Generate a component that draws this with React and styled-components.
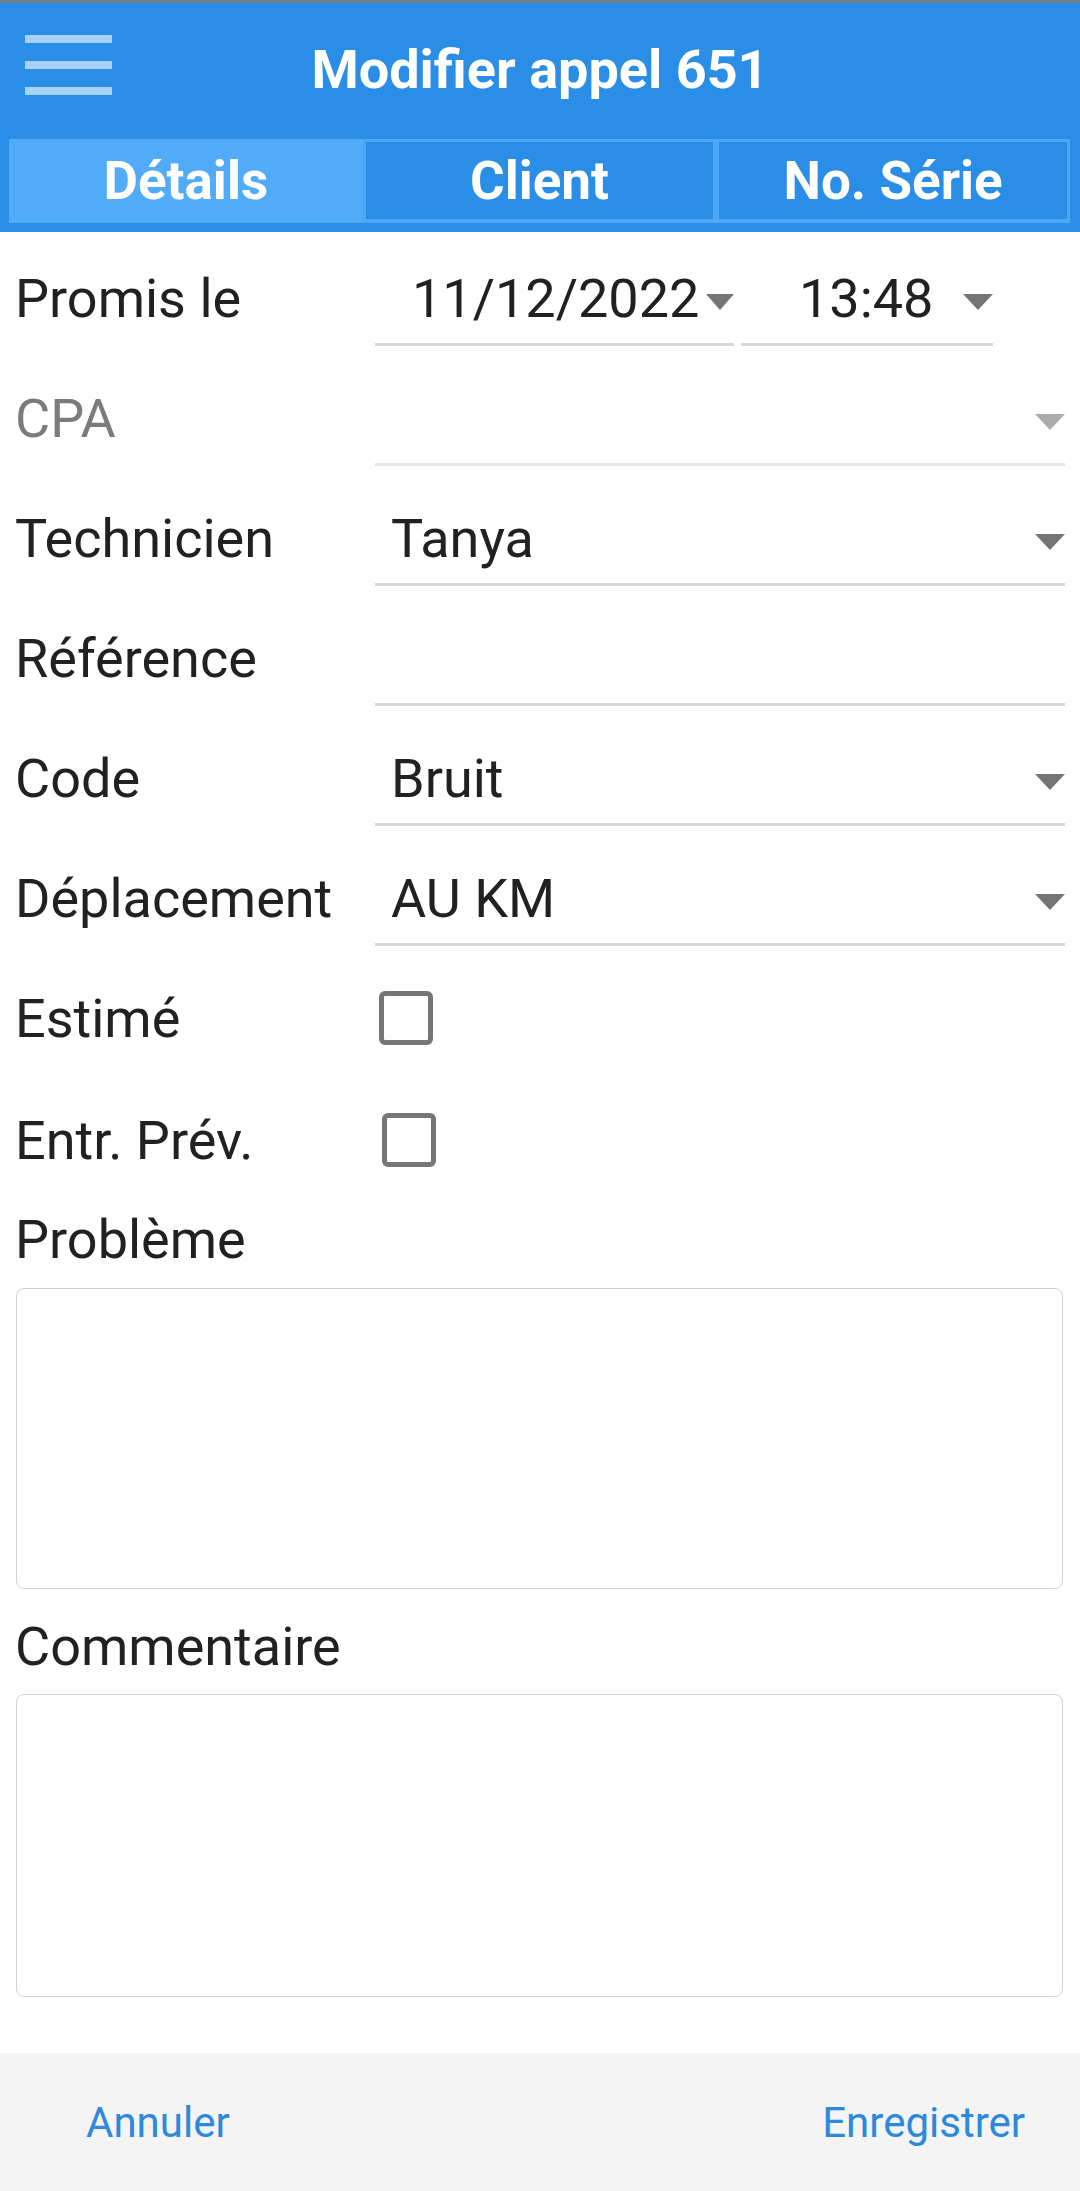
import React from "react";
import styled, { createGlobalStyle } from "styled-components";

const GlobalStyle = createGlobalStyle`
  html, body { margin: 0; padding: 0; background: #ffffff; }
  body { font-family: Roboto, "Noto Sans", "Liberation Sans", sans-serif; color: #212121; }
  * { box-sizing: border-box; }
`;

const Page = styled.div`
  min-height: 100vh;
  display: flex;
  flex-direction: column;
  background: #ffffff;
`;

const StatusStrip = styled.div`
  height: 3px;
  background: #717f8d;
`;

const Header = styled.header`
  background: #2a8de6;
  padding-bottom: 9px;
`;

const Toolbar = styled.div`
  height: 136px;
  display: grid;
  grid-template-columns: 1fr auto 1fr;
  align-items: center;
`;

const MenuButton = styled.div`
  justify-self: start;
  align-self: start;
  margin: 32px 0 0 25px;
  width: 87px;
  display: flex;
  flex-direction: column;
  gap: 18px;
`;

const MenuBar = styled.span`
  display: block;
  height: 8px;
  background: #a8d1f8;
`;

const Title = styled.h1`
  margin: 0 0 4px 0;
  font-size: 54px;
  font-weight: 700;
  color: #ffffff;
  white-space: nowrap;
`;

const Tabs = styled.nav`
  display: grid;
  grid-template-columns: repeat(3, 1fr);
  height: 84px;
  margin: 0 10px 0 9px;
`;

const Tab = styled.div`
  display: flex;
  align-items: center;
  justify-content: center;
  font-size: 53px;
  font-weight: 700;
  color: #ffffff;
  background: ${(p) => (p.$active ? "#52abf9" : "#2a8de6")};
  border: 3px solid ${(p) => (p.$active ? "#52abf9" : "#4ea7f4")};
  border-bottom-width: ${(p) => (p.$active ? "3px" : "4px")};
`;

const Form = styled.main`
  display: flex;
  flex-direction: column;
`;

const Row = styled.div`
  display: grid;
  grid-template-columns: 360px 1fr;
  height: ${(p) => p.$height || 120}px;
  padding: 0 15px 0 15px;
`;

const Label = styled.div`
  height: 114px;
  padding-top: ${(p) => p.$padTop || 21}px;
  padding-bottom: 3px;
  display: flex;
  align-items: center;
  font-size: 54px;
  color: ${(p) => (p.$muted ? "#7b7b7b" : "#212121")};
  white-space: nowrap;
`;

const FieldGroup = styled.div`
  display: flex;
  gap: 7px;
`;

const Field = styled.div`
  height: 114px;
  width: ${(p) => (p.$width ? `${p.$width}px` : "100%")};
  flex: ${(p) => (p.$width ? "none" : "1")};
  padding: 21px 0 0 ${(p) => p.$padLeft || 16}px;
  display: flex;
  align-items: center;
  justify-content: space-between;
  border-bottom: 3px solid ${(p) => (p.$muted ? "#e6e6e6" : "#d7d7d7")};
  font-size: 54px;
  color: #212121;
  white-space: nowrap;
`;

const Caret = styled.svg`
  flex: none;
  margin-top: 8px;
  margin-left: auto;
  fill: ${(p) => (p.$muted ? "#ababab" : "#757575")};
`;

const CheckCell = styled.div`
  display: flex;
  align-items: center;
  padding-top: 10px;
  padding-left: ${(p) => p.$offset || 6}px;
`;

const CheckBox = styled.span`
  display: block;
  width: 54px;
  height: 54px;
  border: 5px solid #767676;
  border-radius: 6px;
`;

const SectionLabel = styled.div`
  height: ${(p) => p.$height}px;
  padding: ${(p) => p.$padTop || 0}px 0 ${(p) => p.$padBottom || 0}px 15px;
  display: flex;
  align-items: center;
  font-size: 54px;
  color: #212121;
`;

const TextBox = styled.textarea`
  display: block;
  height: ${(p) => p.$height}px;
  margin: 0 17px 0 16px;
  width: calc(100% - 33px);
  border: 1px solid #d2d2d2;
  border-radius: 8px;
  resize: none;
  background: #ffffff;
  font-family: inherit;
  font-size: 54px;
  outline: none;
`;

const Footer = styled.footer`
  margin-top: auto;
  height: 138px;
  background: #f4f4f4;
  display: flex;
  align-items: center;
  justify-content: space-between;
  padding: 0 55px 0 86px;
`;

const FooterAction = styled.span`
  font-size: 42px;
  color: #2d89dc;
`;

const DropArrow = ({ muted, width = 30 }) => (
  <Caret $muted={muted} width={width} height="16" viewBox={`0 0 ${width} 16`}>
    <polygon points={`0,0 ${width},0 ${width / 2},16`} />
  </Caret>
);

const SelectRow = ({ label, value, muted, arrow = true }) => (
  <Row>
    <Label $muted={muted}>{label}</Label>
    <Field $muted={muted}>
      <span>{value}</span>
      {arrow && <DropArrow muted={muted} />}
    </Field>
  </Row>
);

const CheckRow = ({ label, offset }) => (
  <Row $height={122}>
    <Label $padTop={21}>{label}</Label>
    <CheckCell $offset={offset}>
      <CheckBox />
    </CheckCell>
  </Row>
);

export default function App() {
  return (
    <>
      <GlobalStyle />
      <Page>
        <StatusStrip />
        <Header>
          <Toolbar>
            <MenuButton>
              <MenuBar />
              <MenuBar />
              <MenuBar />
            </MenuButton>
            <Title>Modifier appel 651</Title>
            <span />
          </Toolbar>
          <Tabs>
            <Tab $active>Détails</Tab>
            <Tab>Client</Tab>
            <Tab>No. Série</Tab>
          </Tabs>
        </Header>
        <Form>
          <Row>
            <Label>Promis le</Label>
            <FieldGroup>
              <Field $width={359} $padLeft={37}>
                <span>11/12/2022</span>
                <DropArrow width={28} />
              </Field>
              <Field $width={252} $padLeft={58}>
                <span>13:48</span>
                <DropArrow />
              </Field>
            </FieldGroup>
          </Row>
          <SelectRow label="CPA" value="" muted />
          <SelectRow label="Technicien" value="Tanya" />
          <SelectRow label="Référence" value="" arrow={false} />
          <SelectRow label="Code" value="Bruit" />
          <SelectRow label="Déplacement" value="AU KM" />
          <CheckRow label="Estimé" offset={4} />
          <CheckRow label="Entr. Prév." offset={7} />
          <SectionLabel $height={92} $padBottom={6}>Problème</SectionLabel>
          <TextBox $height={301} />
          <SectionLabel $height={105} $padTop={9}>Commentaire</SectionLabel>
          <TextBox $height={303} />
        </Form>
        <Footer>
          <FooterAction>Annuler</FooterAction>
          <FooterAction>Enregistrer</FooterAction>
        </Footer>
      </Page>
    </>
  );
}
